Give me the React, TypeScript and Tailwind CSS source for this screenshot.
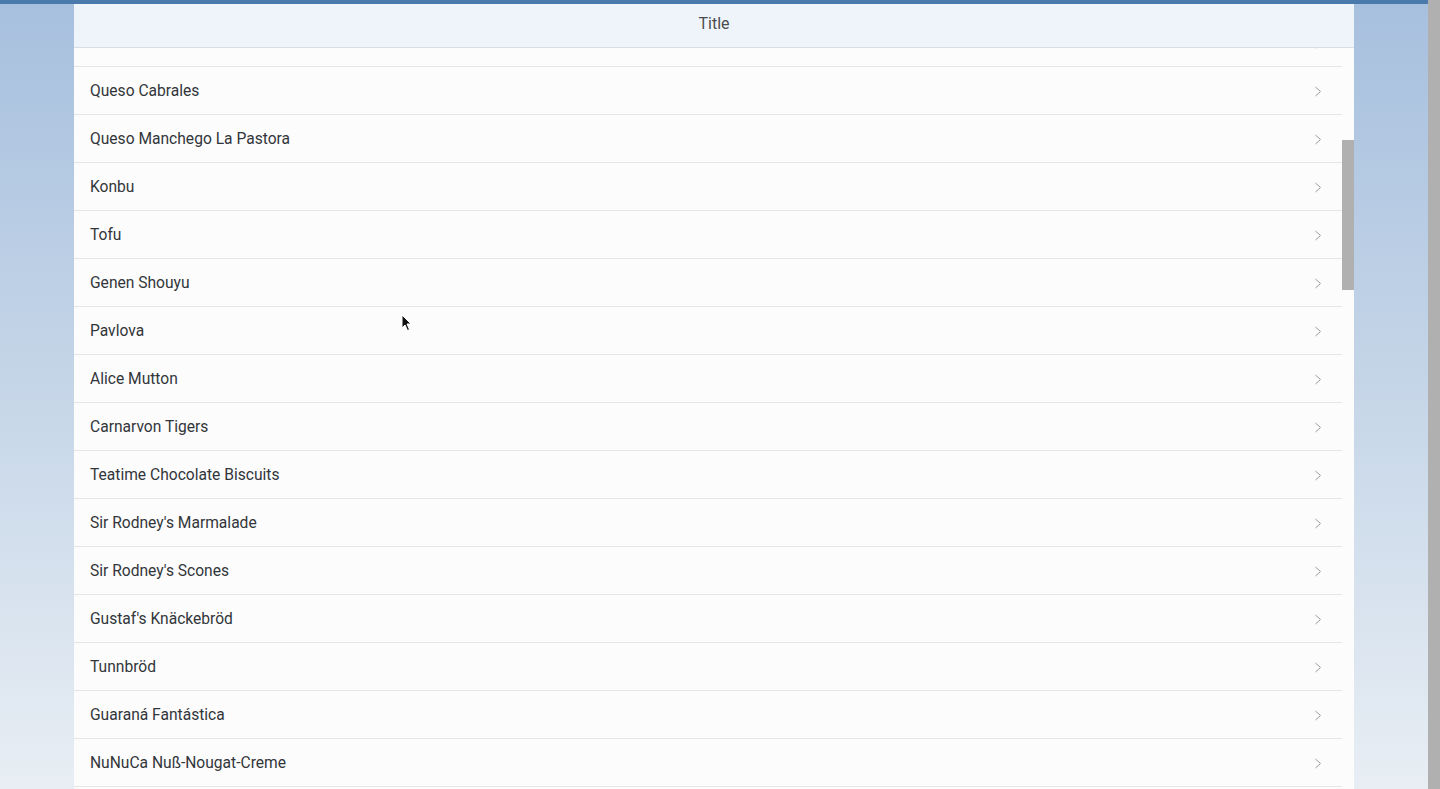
import React from "react";

const items = [
  "Ikura",
  "Queso Cabrales",
  "Queso Manchego La Pastora",
  "Konbu",
  "Tofu",
  "Genen Shouyu",
  "Pavlova",
  "Alice Mutton",
  "Carnarvon Tigers",
  "Teatime Chocolate Biscuits",
  "Sir Rodney's Marmalade",
  "Sir Rodney's Scones",
  "Gustaf's Knäckebröd",
  "Tunnbröd",
  "Guaraná Fantástica",
  "NuNuCa Nuß-Nougat-Creme",
  "Gumbär Gummibärchen",
];

function Chevron() {
  return (
    <svg width="8" height="11" viewBox="0 0 8 11" className="shrink-0">
      <path d="M1.5 1 L6.5 5.5 L1.5 10" fill="none" stroke="#9a9a9a" strokeWidth="1" />
    </svg>
  );
}

export default function App() {
  return (
    <div
      className="relative flex h-[789px] w-[1440px] overflow-hidden"
      style={{ fontFamily: "Roboto, 'Liberation Sans', sans-serif" }}
    >
      <div className="flex flex-1 flex-col">
        <div className="h-[4px] bg-[#4a7aab]" />
        <div className="flex flex-1 min-h-0 px-[74px] bg-gradient-to-b from-[#a7c0de] via-[#c6d6e8] to-[#e8eef4]">
          <div className="flex flex-1 flex-col bg-[#fcfcfc] min-h-0">
            <div className="flex h-[44px] shrink-0 items-center justify-center border-b border-[#d8dde3] bg-[#eff4fb] pb-[4px] text-[16px] text-[#4a4d50]">
              Title
            </div>
            <div className="flex flex-1 min-h-0">
              <div className="flex-1 overflow-hidden">
                <div className="mt-[-29px]">
                  {items.map((name) => (
                    <div
                      key={name}
                      className="flex h-[48px] items-center justify-between border-b border-[#e5e5e5] pl-[16px] pr-[20px] pt-[2px] text-[15.6px] text-[#32363a]"
                    >
                      <span>{name}</span>
                      <Chevron />
                    </div>
                  ))}
                </div>
              </div>
              <div className="w-[12px] shrink-0 pt-[92px]">
                <div className="h-[150px] bg-[#b0b0b0]" />
              </div>
            </div>
          </div>
        </div>
      </div>
      <div className="w-[12px] shrink-0 bg-[#b0b0b0]" />
      <svg
        className="absolute left-[401px] top-[314px]"
        width="12"
        height="18"
        viewBox="0 0 12 18"
      >
        <path
          d="M1 1 L1 14 L4 11 L6.5 16.5 L8.5 15.5 L6 10 L10 10 Z"
          fill="#111"
          stroke="#fff"
          strokeWidth="1"
        />
      </svg>
    </div>
  );
}
